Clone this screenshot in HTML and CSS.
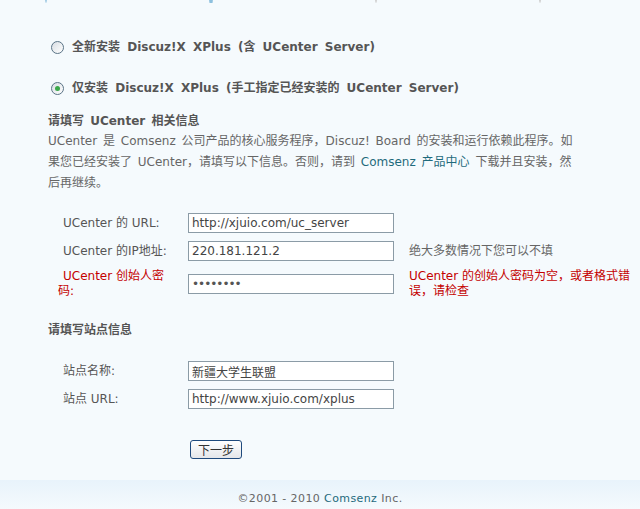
FILE: index.html
```html
<!DOCTYPE html>
<html lang="zh-CN">
<head>
    <meta charset="UTF-8">
    <title>Discuz!X XPlus 安装向导</title>
    <link rel="stylesheet" href="styles.css">
</head>
<body>
    <div class="steps">
        <span class="step done"></span>
        <span class="step current"></span>
        <span class="step"></span>
        <span class="step"></span>
    </div>

    <div class="main">
        <div class="option">
            <span class="radio"></span>
            <span class="option-text">全新安装 Discuz!X XPlus (含 UCenter Server)</span>
        </div>
        <div class="option">
            <span class="radio checked"></span>
            <span class="option-text">仅安装 Discuz!X XPlus (手工指定已经安装的 UCenter Server)</span>
        </div>

        <h4 class="title">请填写 UCenter 相关信息</h4>
        <p class="desc">UCenter 是 Comsenz 公司产品的核心服务程序，Discuz! Board 的安装和运行依赖此程序。如果您已经安装了 UCenter，请填写以下信息。否则，请到 <a href="#">Comsenz 产品中心</a> 下载并且安装，然后再继续。</p>

        <div class="form-grid">
            <label class="label">UCenter 的 URL:</label>
            <input class="txt" type="text" value="http://xjuio.com/uc_server">
            <span class="hint"></span>

            <label class="label">UCenter 的IP地址:</label>
            <input class="txt" type="text" value="220.181.121.2">
            <span class="hint">绝大多数情况下您可以不填</span>

            <label class="label red">UCenter 创始人密码:</label>
            <input class="txt pwd" type="text" value="••••••••">
            <span class="hint red">UCenter 的创始人密码为空，或者格式错误，请检查</span>
        </div>

        <h4 class="title site-title">请填写站点信息</h4>

        <div class="form-grid site-grid">
            <label class="label">站点名称:</label>
            <input class="txt" type="text" value="新疆大学生联盟">
            <span class="hint"></span>

            <label class="label">站点 URL:</label>
            <input class="txt" type="text" value="http://www.xjuio.com/xplus">
            <span class="hint"></span>
        </div>

        <div class="actions">
            <button class="btn">下一步</button>
        </div>
    </div>

    <footer>
        <p>&copy;2001 - 2010 <a href="#">Comsenz</a> Inc.</p>
    </footer>
</body>
</html>
```

FILE: styles.css
```css
/* Estilos gerais */
body {
    margin: 0;
    padding: 0;
    background-color: #f5fafd;
    font-family: Tahoma, "DejaVu Sans", "Noto Sans CJK SC", sans-serif;
    font-size: 12px;
    color: #666;
}

a {
    color: #1f6a7c;
    text-decoration: none;
}

/* passos no topo (quase fora da tela) */
.steps {
    height: 3px;
    overflow: hidden;
    display: flex;
    padding-left: 45px;
}

.step {
    width: 12px;
    height: 12px;
    margin-top: -11px;
    margin-right: 162px;
    border: 1px solid #c6c6c6;
    border-radius: 50%;
    background-color: #fff;
}

.step.done {
    border-color: #8dc0de;
}

.step.current {
    width: 14px;
    height: 14px;
    margin-top: -12px;
    border: 2px solid #8dc0de;
    box-shadow: inset 0 0 0 1px #fff, inset 0 0 0 2px #8dc0de;
}

.main {
    padding-left: 48px;
    width: 530px;
    word-spacing: 2px;
}

.option {
    display: flex;
    align-items: center;
    height: 20px;
    margin-bottom: 21px;
    word-spacing: 3px;
}

.option:first-child {
    margin-top: 34px;
}

.radio {
    flex: none;
    width: 11px;
    height: 11px;
    border: 1px solid #5a7386;
    border-radius: 50%;
    background: linear-gradient(135deg, #d8dde3, #ffffff);
    margin-left: 3px;
    margin-right: 8px;
    position: relative;
}

.radio.checked::after {
    content: "";
    position: absolute;
    left: 3px;
    top: 3px;
    width: 5px;
    height: 5px;
    border-radius: 50%;
    background-color: #3aa84a;
}

.option-text {
    font-weight: bold;
    color: #555;
    line-height: 20px;
    white-space: nowrap;
}

.title {
    margin: -8px 0 0 0;
    height: 20px;
    line-height: 20px;
    font-size: 12px;
    font-weight: bold;
    color: #555;
}

.desc {
    margin: 0;
    line-height: 21px;
}

.form-grid {
    display: grid;
    grid-template-columns: 130px 206px 240px;
    column-gap: 0;
    row-gap: 8px;
    align-items: center;
    margin-top: 19px;
    margin-left: 10px;
    word-spacing: 0;
}

.label {
    color: #555;
    text-indent: 5px;
    line-height: 15px;
    padding-right: 10px;
}

.red {
    color: #c40000;
}

.hint {
    line-height: 15px;
    padding-left: 15px;
}

.txt {
    box-sizing: border-box;
    width: 206px;
    height: 20px;
    margin: 0;
    padding: 1px 3px;
    border: 1px solid #8b9ba6;
    background-color: #fff;
    font-family: Tahoma, "DejaVu Sans", "Noto Sans CJK SC", sans-serif;
    font-size: 12px;
    color: #444;
}

.pwd {
    letter-spacing: -1px;
    color: #555;
}

.site-title {
    margin-top: 21px;
}

.site-grid {
    margin-top: 21px;
}

.actions {
    padding-left: 142px;
    margin-top: 31px;
}

.btn {
    width: 52px;
    height: 19px;
    padding: 0;
    border: 1px solid #1f4a7d;
    border-radius: 3px;
    background: linear-gradient(#ffffff, #e4e6ea);
    font-family: "Noto Sans CJK SC", sans-serif;
    font-size: 12px;
    line-height: 15px;
    color: #333;
}

footer {
    margin-top: 21px;
    height: 30px;
    background: linear-gradient(#e8f3fb, #f5fafd);
    text-align: center;
}

footer p {
    margin: 0;
    padding-top: 12px;
    font-size: 11px;
    letter-spacing: 0.4px;
    color: #666;
}
```
